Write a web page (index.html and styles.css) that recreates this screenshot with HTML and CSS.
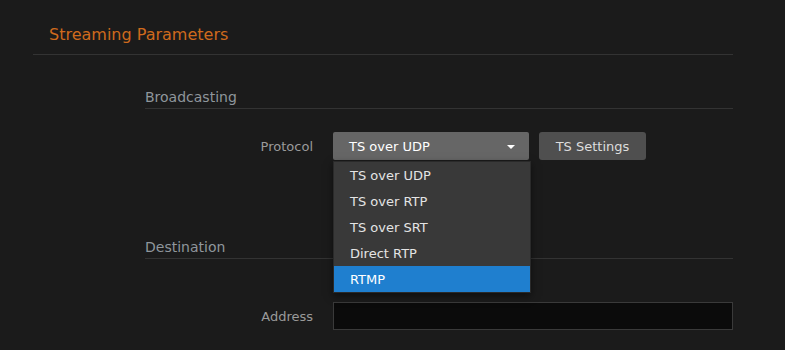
FILE: index.html
```html
<!DOCTYPE html>
<html lang="en">
<head>
    <meta charset="UTF-8">
    <meta name="viewport" content="width=device-width, initial-scale=1.0">
    <title>Streaming Parameters</title>
    <link rel="stylesheet" href="styles.css">
</head>
<body>
    <div class="panel">
        <div class="panel-title">Streaming Parameters</div>

        <div class="seccion">
            <div class="seccion-titulo">Broadcasting</div>
            <div class="fila fila-protocolo">
                <label class="etiqueta">Protocol</label>
                <div class="control">
                    <div class="selector">
                        <span>TS over UDP</span>
                        <span class="flecha"></span>
                    </div>
                    <button type="button" class="boton">TS Settings</button>
                    <ul class="menu">
                        <li>TS over UDP</li>
                        <li>TS over RTP</li>
                        <li>TS over SRT</li>
                        <li>Direct RTP</li>
                        <li class="activo">RTMP</li>
                    </ul>
                </div>
            </div>
        </div>

        <div class="seccion seccion-destino">
            <div class="seccion-titulo">Destination</div>
            <div class="fila fila-direccion">
                <label class="etiqueta">Address</label>
                <div class="control">
                    <input type="text" class="campo" value="">
                </div>
            </div>
        </div>
    </div>
</body>
</html>
```

FILE: styles.css
```css
body{
    margin: 0;
    background-color: #1b1b1b;
    font-family: "DejaVu Sans", Verdana, sans-serif;
    font-size: 13px;
}
.panel{
    margin-left: 33px;
    width: 700px;
}
.panel-title{
    padding: 25px 0 9px 16px;
    line-height: 20px;
    font-size: 16px;
    color: #cf6a1d;
    border-bottom: 1px solid #333333;
}
.seccion{
    margin-left: 112px;
    padding-top: 33px;
}
.seccion-destino{
    padding-top: 78px;
}
.seccion-titulo{
    font-size: 14px;
    line-height: 18px;
    padding-bottom: 2px;
    color: #8f969c;
    border-bottom: 1px solid #333333;
}
.fila{
    display: flex;
    align-items: center;
    gap: 20px;
}
.fila-protocolo{
    margin-top: 23px;
}
.fila-direccion{
    margin-top: 43px;
}
.etiqueta{
    width: 168px;
    text-align: right;
    color: #9a9a9a;
}
.control{
    position: relative;
    flex: 1;
    display: flex;
    gap: 10px;
}
.selector{
    width: 196px;
    height: 28px;
    box-sizing: border-box;
    padding: 0 14px 0 16px;
    display: flex;
    align-items: center;
    justify-content: space-between;
    background-color: #666666;
    border-radius: 2px;
    color: #ffffff;
}
.flecha{
    width: 0;
    height: 0;
    border-left: 4px solid transparent;
    border-right: 4px solid transparent;
    border-top: 4px solid #ffffff;
    margin-top: 1px;
}
.boton{
    width: 107px;
    height: 28px;
    padding: 0;
    border: none;
    border-radius: 3px;
    background-color: #4f4f4f;
    color: #dddddd;
    font-family: inherit;
    font-size: 13px;
}
.menu{
    position: absolute;
    top: 29px;
    left: 0;
    width: 198px;
    box-sizing: border-box;
    margin: 0;
    padding: 0;
    list-style: none;
    background-color: #393939;
    border: 1px solid #2a2a2a;
    box-shadow: 0 3px 8px rgba(0, 0, 0, 0.5);
    z-index: 2;
}
.menu li{
    height: 26px;
    line-height: 27px;
    padding-left: 16px;
    color: #e4e4e4;
}
.menu li.activo{
    background-color: #1f7fcf;
    color: #ffffff;
}
.campo{
    width: 400px;
    height: 28px;
    box-sizing: border-box;
    background-color: #0b0b0b;
    border: 1px solid #3a3a3a;
    color: #ffffff;
    padding: 0 8px;
    font-family: inherit;
}
```
